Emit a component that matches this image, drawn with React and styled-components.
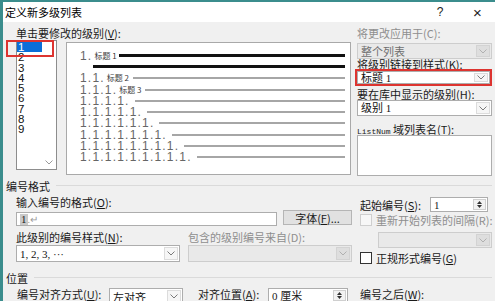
import styled, { createGlobalStyle } from "styled-components";

const GlobalStyle = createGlobalStyle`
  html, body { margin: 0; padding: 0; background: #f0f0f0; }
  body {
    font-family: "Noto Sans CJK SC", "Liberation Sans", sans-serif;
    font-size: 11px;
    color: #1a1a1a;
  }
`;

const Window = styled.div`
  position: relative;
  width: 495px;
  height: 301px;
  box-sizing: border-box;
  border-top: 2px solid #3b8d8d;
  border-left: 3px solid #3b8d8d;
  background: #f0f0f0;
  overflow: hidden;
`;

const TitleBar = styled.div`
  display: flex;
  align-items: center;
  height: 20px;
  background: #fff;
  padding-left: 2px;
`;

const Title = styled.span`
  font-size: 11px;
  color: #000;
  flex: 1;
`;

const TitleBtn = styled.span`
  width: ${(p) => p.$w}px;
  text-align: center;
  font-family: "Liberation Sans", sans-serif;
  font-size: ${(p) => p.$fs}px;
  color: #222;
`;

const TopSection = styled.div`
  display: flex;
  align-items: flex-start;
  padding-left: 13px;
`;

const LeftPane = styled.div`
  display: flex;
  flex-direction: column;
`;

const Label = styled.div`
  line-height: ${(p) => p.$lh || 14}px;
  height: ${(p) => p.$lh || 14}px;
  margin-top: ${(p) => p.$mt || 0}px;
  color: ${(p) => (p.$off ? "#8e8e8e" : "#1a1a1a")};
  white-space: nowrap;
  width: ${(p) => (p.$w ? `${p.$w}px` : "auto")};
  flex-shrink: 0;
  u { text-decoration: underline; }
`;

const LevelRow = styled.div`
  display: flex;
  align-items: flex-start;
`;

const LevelList = styled.div`
  display: flex;
  width: 41px;
  height: 130px;
  box-sizing: border-box;
  border: 1px solid #8d8d8d;
  background: #fff;
  padding-top: 1px;
`;

const LevelItems = styled.div`
  display: flex;
  flex-direction: column;
`;

const LevelItem = styled.div`
  width: 25px;
  height: 10.3px;
  line-height: 10.3px;
  padding-left: 1px;
  box-sizing: border-box;
  font-family: "Liberation Sans", Arial, sans-serif;
  font-size: 11.5px;
  background: ${(p) => (p.$sel ? "#0a6ed8" : "transparent")};
  color: ${(p) => (p.$sel ? "#fff" : "#111")};
`;

const ScrollCol = styled.div`
  flex: 1;
  display: flex;
  flex-direction: column;
  justify-content: flex-end;
  align-items: center;
  padding-bottom: 4px;
`;

const Preview = styled.div`
  width: 285px;
  height: 133px;
  margin: 2px 0 0 9px;
  box-sizing: border-box;
  border: 1px solid #a9a9a9;
  background: #fff;
  padding: 7px 5px 0 13px;
  display: flex;
  flex-direction: column;
`;

const PreviewRow = styled.div`
  display: flex;
  align-items: center;
  height: 11.3px;
  padding-left: ${(p) => p.$indent || 0}px;
`;

const Num = styled.span`
  font-family: "Liberation Sans", Arial, sans-serif;
  font-size: 12px;
  letter-spacing: 1.2px;
  color: #666;
  white-space: nowrap;
  line-height: 10px;
`;

const HeadText = styled.span`
  font-size: 8px;
  color: #3a3a3a;
  margin-left: 2px;
  white-space: nowrap;
  line-height: 10px;
`;

const Rule = styled.span`
  flex: 1;
  height: ${(p) => (p.$bold ? 3 : 2)}px;
  background: ${(p) => (p.$bold ? "#111" : "#a6a6a6")};
  margin-left: ${(p) => p.$gap ?? 5}px;
`;

const RightPane = styled.div`
  display: flex;
  flex-direction: column;
  margin-left: 6px;
  width: 135px;
`;

const Combo = styled.div`
  display: flex;
  align-items: center;
  box-sizing: border-box;
  width: ${(p) => (p.$w ? `${p.$w}px` : "100%")};
  height: ${(p) => p.$h || 16}px;
  margin-top: ${(p) => p.$mt || 0}px;
  margin-left: ${(p) => p.$ml || 0}px;
  border: 1px solid ${(p) => (p.$off ? "#cdcdcd" : "#adadad")};
  background: ${(p) => (p.$off ? "#e9e9e9" : "#fff")};
  color: ${(p) => (p.$off ? "#6f6f6f" : "#111")};
  padding-left: 3px;
  flex-shrink: 0;
`;

const ComboText = styled.span`
  flex: 1;
  white-space: nowrap;
  font-family: ${(p) =>
    p.$serif
      ? `"Liberation Serif", "Noto Sans CJK SC", serif`
      : `"Noto Sans CJK SC", "Liberation Sans", sans-serif`};
  font-size: 11px;
  line-height: 12px;
  align-self: center;
`;

const DropBtn = styled.span`
  display: flex;
  align-items: center;
  justify-content: center;
  width: 12px;
  align-self: stretch;
  margin: 1px;
  border: 1px solid ${(p) => (p.$off ? "#d3d3d3" : "#dcdcdc")};
  background: ${(p) => (p.$off ? "#dedede" : "#f6f6f6")};
`;

const RedFrame = styled.div`
  margin-left: -2px;
  width: 137px;
  box-sizing: border-box;
  border: 2px solid #dd3430;
`;

const TextBox = styled.div`
  box-sizing: border-box;
  width: ${(p) => (p.$w ? `${p.$w}px` : "100%")};
  height: ${(p) => p.$h}px;
  margin-top: ${(p) => p.$mt || 0}px;
  border: 1px solid #adadad;
  background: #fff;
  display: flex;
  align-items: center;
  padding-left: 3px;
  flex-shrink: 0;
`;

const GroupHead = styled.div`
  display: flex;
  align-items: center;
  height: 14px;
  line-height: 14px;
  margin-top: ${(p) => p.$mt || 0}px;
  padding-left: 3px;
  color: #1a1a1a;
  &::after {
    content: "";
    flex: 1;
    height: 1px;
    margin: 0 3px 2px 6px;
    background: #dadada;
  }
`;

const FormatSection = styled.div`
  display: grid;
  grid-template-columns: 336px 132px;
  column-gap: 8px;
  padding-left: 13px;
`;

const Col = styled.div`
  display: flex;
  flex-direction: column;
`;

const Row = styled.div`
  display: flex;
  align-items: ${(p) => p.$align || "center"};
  height: ${(p) => p.$h}px;
  margin-top: ${(p) => p.$mt || 0}px;
  margin-left: ${(p) => p.$ml || 0}px;
  gap: ${(p) => p.$gap || 0}px;
`;

const FieldShade = styled.span`
  background: #c9c9c9;
  font-family: "Liberation Serif", serif;
  font-size: 11px;
  line-height: 11px;
  padding: 0 1px;
`;

const FieldRest = styled.span`
  color: #9a9a9a;
  font-family: "Liberation Serif", serif;
  font-size: 10px;
`;

const Button = styled.div`
  box-sizing: border-box;
  width: 69px;
  height: 15px;
  margin-left: 6px;
  align-self: flex-start;
  border: 1px solid #b5b5b5;
  background: #e1e1e1;
  display: flex;
  align-items: center;
  justify-content: center;
  font-size: 11px;
  color: #1a1a1a;
`;

const Spin = styled.div`
  display: flex;
  align-items: stretch;
  box-sizing: border-box;
  width: ${(p) => p.$w}px;
  height: 15px;
  border: 1px solid #adadad;
  background: #fff;
  padding-left: 3px;
  align-self: flex-start;
`;

const SpinBtns = styled.span`
  width: 11px;
  margin: 1px 1px 1px 0;
  border: 1px solid #cfcfcf;
  background: #f2f2f2;
  display: flex;
  flex-direction: column;
  align-items: center;
  justify-content: center;
  gap: 1px;
`;

const Check = styled.span`
  box-sizing: border-box;
  width: 12px;
  height: 12px;
  border: 1px solid ${(p) => (p.$off ? "#cfcfcf" : "#333")};
  background: ${(p) => (p.$off ? "#f7f7f7" : "#fff")};
  flex-shrink: 0;
`;

const ListNum = styled.span`
  font-family: "Liberation Mono", monospace;
  font-size: 8px;
`;

const RedMark = styled.div`
  position: absolute;
  left: 3px;
  top: 38px;
  width: 48px;
  height: 17px;
  box-sizing: border-box;
  border: 2px solid #dd3430;
`;

const Chevron = ({ color = "#7a7a7a" }) => (
  <svg width="8" height="5" viewBox="0 0 8 5">
    <polyline points="0.5,0.5 4,4 7.5,0.5" fill="none" stroke={color} strokeWidth="1" />
  </svg>
);

const SpinArrows = () => (
  <>
    <svg width="5" height="3" viewBox="0 0 5 3">
      <polygon points="0,3 2.5,0 5,3" fill="#333" />
    </svg>
    <svg width="5" height="3" viewBox="0 0 5 3">
      <polygon points="0,0 2.5,3 5,0" fill="#333" />
    </svg>
  </>
);

const levels = [1, 2, 3, 4, 5, 6, 7, 8, 9];

export default function App() {
  return (
    <>
      <GlobalStyle />
      <Window>
        <TitleBar>
          <Title>定义新多级列表</Title>
          <TitleBtn $w={40} $fs={12}>?</TitleBtn>
          <TitleBtn $w={35} $fs={15}>×</TitleBtn>
        </TitleBar>

        <TopSection>
          <LeftPane>
            <Label $mt={4}>单击要修改的级别(<u>V</u>):</Label>
            <LevelRow>
              <LevelList>
                <LevelItems>
                  {levels.map((n) => (
                    <LevelItem key={n} $sel={n === 1}>{n}</LevelItem>
                  ))}
                </LevelItems>
                <ScrollCol>
                  <Chevron color="#9a9a9a" />
                </ScrollCol>
              </LevelList>
              <Preview>
                <PreviewRow>
                  <Num>1.</Num>
                  <HeadText>标题 1</HeadText>
                  <Rule $bold $gap={2} />
                </PreviewRow>
                <PreviewRow $indent={13}>
                  <Rule $bold $gap={0} />
                </PreviewRow>
                <PreviewRow>
                  <Num>1.1.</Num>
                  <HeadText>标题 2</HeadText>
                  <Rule $gap={4} />
                </PreviewRow>
                <PreviewRow>
                  <Num>1.1.1.</Num>
                  <HeadText>标题 3</HeadText>
                  <Rule $gap={4} />
                </PreviewRow>
                {levels.slice(3).map((n) => (
                  <PreviewRow key={n}>
                    <Num>{"1.".repeat(n)}</Num>
                    <Rule $gap={5} />
                  </PreviewRow>
                ))}
              </Preview>
            </LevelRow>
          </LeftPane>

          <RightPane>
            <Label $mt={4} $off>将更改应用于(C):</Label>
            <Combo $mt={3} $off>
              <ComboText>整个列表</ComboText>
              <DropBtn $off><Chevron color="#b0b0b0" /></DropBtn>
            </Combo>
            <Label $lh={10}>将级别链接到样式(<u>K</u>):</Label>
            <RedFrame>
              <Combo $h={13}>
                <ComboText $serif>标题 1</ComboText>
                <DropBtn><Chevron /></DropBtn>
              </Combo>
            </RedFrame>
            <Label $mt={3} $lh={11}>要在库中显示的级别(<u>H</u>):</Label>
            <Combo>
              <ComboText $serif>级别 1</ComboText>
              <DropBtn><Chevron /></DropBtn>
            </Combo>
            <Label $mt={7} $lh={12}><ListNum>ListNum</ListNum> 域列表名(<u>T</u>):</Label>
            <TextBox $h={41} />
          </RightPane>
        </TopSection>

        <GroupHead $mt={3}>编号格式</GroupHead>
        <FormatSection>
          <Col>
            <Label $mt={2}>输入编号的格式(<u>O</u>):</Label>
            <Row $h={16} $mt={1} $align="flex-start">
              <TextBox $w={261} $h={14} $mt={2}>
                <FieldShade>1</FieldShade>
                <FieldRest>.↵</FieldRest>
              </TextBox>
              <Button>字体(<u>F</u>)...</Button>
            </Row>
            <Row $h={14} $mt={4}>
              <Label $w={172}>此级别的编号样式(<u>N</u>):</Label>
              <Label $off>包含的级别编号来自(D):</Label>
            </Row>
            <Row $h={17} $mt={1} $gap={8}>
              <Combo $w={164} $h={17}>
                <ComboText $serif>1, 2, 3, ···</ComboText>
                <DropBtn><Chevron /></DropBtn>
              </Combo>
              <Combo $w={164} $h={17} $off>
                <ComboText />
                <DropBtn $off><Chevron color="#b0b0b0" /></DropBtn>
              </Combo>
            </Row>
          </Col>
          <Col>
            <Row $h={15} $mt={4}>
              <Label $w={70}>起始编号(<u>S</u>):</Label>
              <Spin $w={58}>
                <ComboText $serif>1</ComboText>
                <SpinBtns><SpinArrows /></SpinBtns>
              </Spin>
            </Row>
            <Row $h={12} $mt={2} $gap={4}>
              <Check $off />
              <Label $off>重新开始列表的间隔(R):</Label>
            </Row>
            <Combo $w={114} $ml={18} $mt={6} $off>
              <ComboText />
              <DropBtn $off><Chevron color="#b0b0b0" /></DropBtn>
            </Combo>
            <Row $h={12} $mt={4} $gap={4}>
              <Check />
              <Label>正规形式编号(<u>G</u>)</Label>
            </Row>
          </Col>
        </FormatSection>

        <GroupHead $mt={7}>位置</GroupHead>
        <Row $h={17} $mt={3} $ml={14} $align="flex-start">
          <Label $w={92} $lh={12}>编号对齐方式(<u>U</u>):</Label>
          <Combo $w={74} $h={17}>
            <ComboText>左对齐</ComboText>
            <DropBtn><Chevron /></DropBtn>
          </Combo>
          <Label $w={70} $lh={12} style={{ marginLeft: 15 }}>对齐位置(<u>A</u>):</Label>
          <Spin $w={80}>
            <ComboText $serif>0 厘米</ComboText>
            <SpinBtns><SpinArrows /></SpinBtns>
          </Spin>
          <Label $lh={12} style={{ marginLeft: 12 }}>编号之后(<u>W</u>):</Label>
        </Row>

        <RedMark />
      </Window>
    </>
  );
}
